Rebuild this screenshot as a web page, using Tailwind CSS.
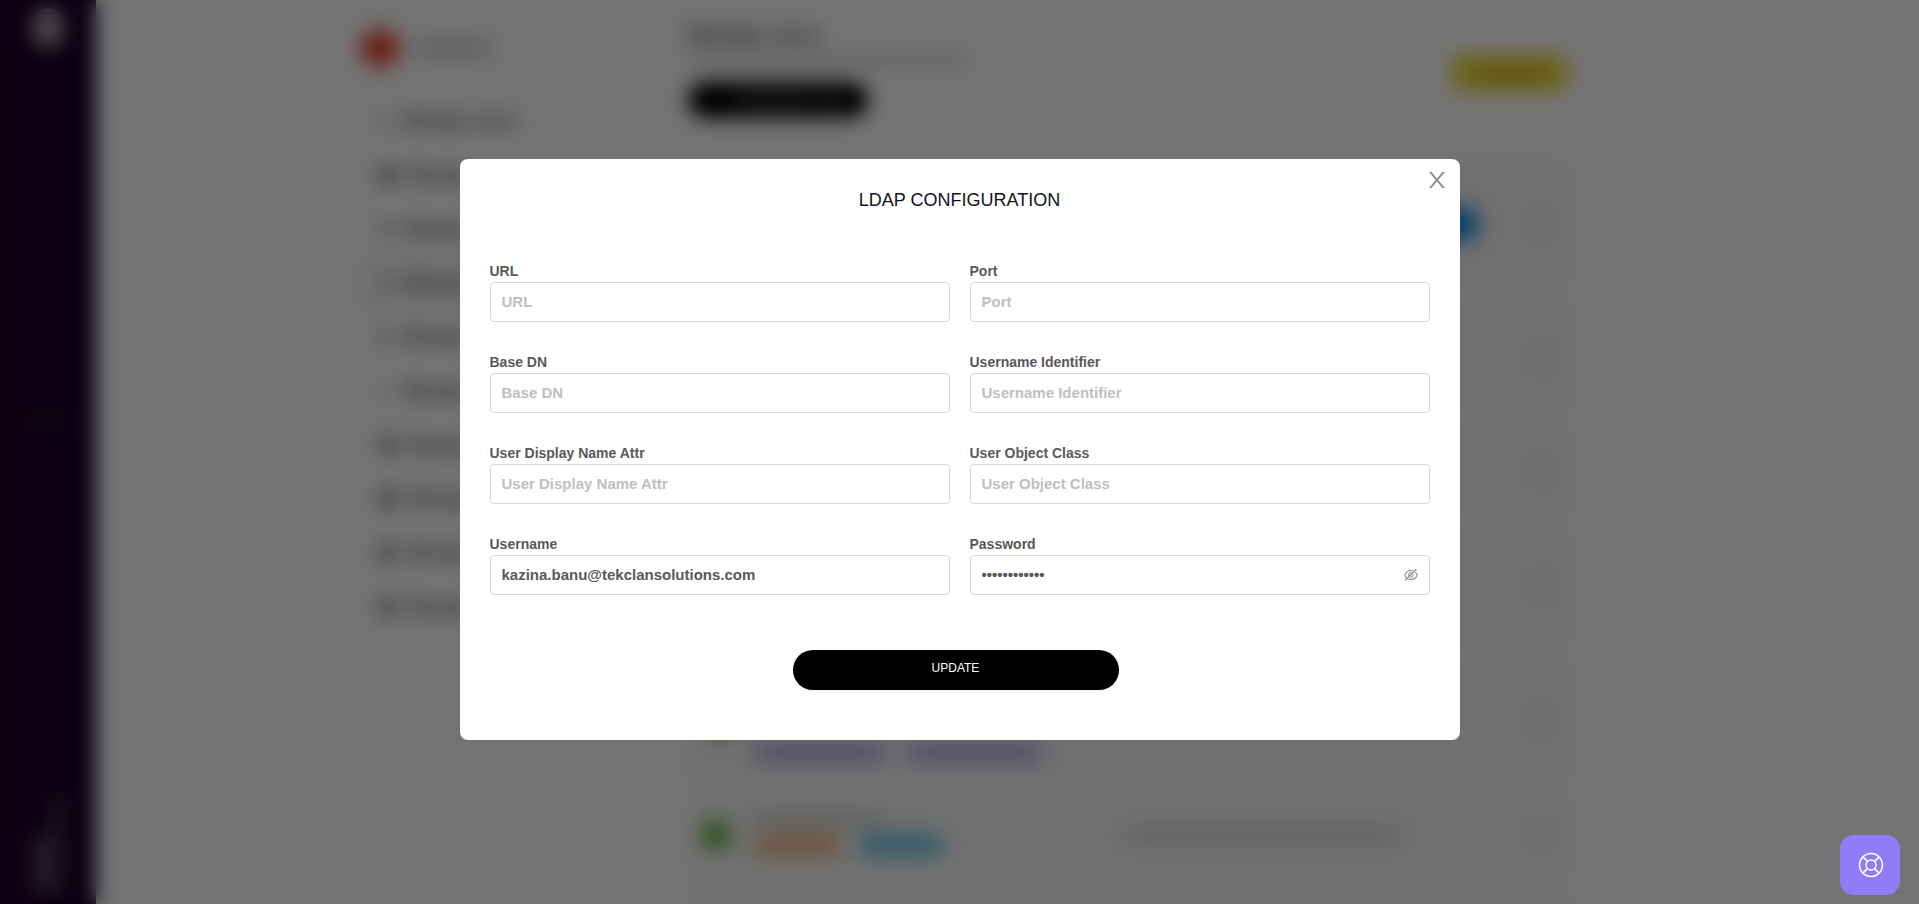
<!DOCTYPE html>
<html lang="en">
<head>
<meta charset="utf-8">
<title>LDAP Configuration</title>
<script src="https://cdn.jsdelivr.net/npm/@tailwindcss/browser@4"></script>
</head>
<body class="min-h-screen overflow-hidden bg-white font-['Liberation_Sans',Arial,sans-serif] text-[#595959]">

<!-- Page behind the dialog -->
<div class="flex h-screen overflow-hidden" aria-hidden="true" inert>
  <aside class="flex w-24 shrink-0 flex-col items-center justify-between bg-linear-to-r from-[#200028] to-[#120028] pt-2 pb-3">
    <div class="h-10 w-8 rounded-full bg-[#a09ca4]"></div>
    <div class="h-3 w-10 bg-[#241830]"></div>
    <div class="flex items-end">
      <div class="h-14 w-5 bg-[#4a3c50]"></div>
      <div class="h-24 w-3 bg-[#403446]"></div>
    </div>
  </aside>

  <div class="flex min-w-0 flex-1 pl-[264px]">
    <nav class="w-[328px] shrink-0 pt-7">
      <div class="flex items-center gap-3">
        <div class="size-10 rounded-full bg-[#e8503f]"></div>
        <div class="h-3 w-20 bg-[#c4c4c4]"></div>
      </div>
      <ul class="pt-[26px] text-[17px] font-bold text-[#444]">
        <li class="flex h-[54px] items-center gap-3 pl-5"><span class="size-3 bg-[#ccc]"></span>Manage users</li>
        <li class="flex h-[54px] items-center gap-3 pl-5"><span class="h-3 w-4 bg-[#555]"></span>Manage</li>
        <li class="flex h-[54px] items-center gap-3 pl-5"><span class="size-3 bg-[#aaa]"></span>Manage</li>
        <li class="flex h-[54px] items-center gap-3 bg-[#f8f8f8] pl-5"><span class="size-3 bg-[#aaa]"></span>Manage</li>
        <li class="flex h-[54px] items-center gap-3 pl-5"><span class="size-3 bg-[#aaa]"></span>Manage</li>
        <li class="flex h-[54px] items-center gap-3 pl-5"><span class="size-3 bg-[#ddd]"></span>Manage</li>
        <li class="flex h-[54px] items-center gap-3 pl-5"><span class="size-4 bg-[#888]"></span>Manage</li>
        <li class="flex h-[54px] items-center gap-3 pl-5"><span class="size-4 bg-[#777]"></span>Manage</li>
        <li class="flex h-[54px] items-center gap-3 pl-5"><span class="size-4 bg-[#888]"></span>Manage</li>
        <li class="flex h-[54px] items-center gap-3 pl-5"><span class="size-4 bg-[#888]"></span>Manage</li>
      </ul>
    </nav>

    <main class="w-[882px] shrink-0 pt-5">
      <div class="flex items-center justify-between">
        <div>
          <h2 class="text-xl leading-7 font-bold text-[#555]">Manage users</h2>
          <div class="mt-1 flex h-4 items-center"><div class="h-2 w-[275px] bg-[#ccc]"></div></div>
          <div class="mt-3.5 flex h-9 w-[180px] items-center justify-end gap-3 rounded-full bg-black px-8">
            <div class="h-2 w-20 bg-[#555]"></div><div class="h-4 w-2 bg-[#777]"></div>
          </div>
        </div>
        <div class="mt-2 flex h-9 w-[120px] items-center justify-center rounded-full bg-[#f0da30]"><div class="h-2 w-16 bg-[#b09c20]"></div></div>
      </div>

      <div class="mt-11 flex flex-col gap-[18px]">
        <section class="flex h-[124px] items-center justify-end gap-[51px] bg-[#f8f8f8] pr-4">
          <div class="h-9 w-32 rounded-full bg-[#1890e8]"></div><div class="size-6 rounded-full bg-[#f2f2f2]"></div>
        </section>
        <section class="flex h-[106px] items-center justify-end bg-[#f8f8f8] pr-4"><div class="size-6 rounded-full bg-[#f2f2f2]"></div></section>
        <section class="flex h-[84px] items-center justify-end bg-[#f8f8f8] pr-4"><div class="size-6 rounded-full bg-[#f2f2f2]"></div></section>
        <section class="flex h-[114px] items-center justify-end bg-[#f8f8f8] pr-4"><div class="size-6 rounded-full bg-[#f2f2f2]"></div></section>
        <section class="flex h-[118px] items-center bg-[#f8f8f8] px-4">
          <div class="size-8 rounded-full bg-[#68b848]"></div>
          <div class="flex flex-1 gap-4 self-end pb-4 pl-4">
            <div class="h-6 w-[136px] rounded-full bg-[#c0bcec]"></div><div class="h-6 w-[140px] rounded-full bg-[#c0bcec]"></div>
          </div>
          <div class="size-6 rounded-full bg-[#f2f2f2]"></div>
        </section>
        <section class="flex h-[74px] items-center bg-[#f8f8f8] pr-4 pl-3">
          <div class="size-8 rounded-full bg-[#70b850]"></div>
          <div class="flex flex-1 flex-col gap-2 pl-5">
            <div class="h-3 w-[130px] bg-[#ccc]"></div>
            <div class="flex gap-4"><div class="h-6 w-[90px] rounded-full bg-[#f4c090]"></div><div class="h-6 w-[86px] rounded-full bg-[#78cce8]"></div></div>
          </div>
          <div class="mr-[132px] h-2 w-[270px] bg-[#c0c0c0]"></div>
          <div class="size-6 rounded-full bg-[#f2f2f2]"></div>
        </section>
        <section class="h-24 bg-[#f8f8f8]"></section>
      </div>
    </main>
  </div>
</div>

<!-- Dialog -->
<div class="fixed inset-0 flex items-start justify-center bg-black/55 pt-[159px] backdrop-blur-[10px]">
  <div role="dialog" aria-modal="true" aria-labelledby="dialog-title" class="relative w-full max-w-[1000px] rounded-lg bg-white px-[30px] pt-[27px] pb-[50px]">
    <button type="button" aria-label="Close" class="absolute top-2.5 right-3 flex cursor-pointer text-[#8c8c8c]">
      <svg class="size-[22px]" viewBox="64 64 896 896" fill="currentColor"><path d="M563.8 512l262.5-312.9c4.4-5.2.7-13.1-6.1-13.1h-79.8c-4.7 0-9.2 2.1-12.3 5.7L511.6 449.8 295.1 191.7c-3-3.6-7.5-5.7-12.3-5.7H203c-6.8 0-10.5 7.9-6.1 13.1L459.4 512 196.9 824.9A7.95 7.95 0 00203 838h79.8c4.7 0 9.2-2.1 12.3-5.7l216.5-258.1 216.5 258.1c3 3.6 7.5 5.7 12.3 5.7h79.8c6.8 0 10.5-7.9 6.1-13.1L563.8 512z"/></svg>
    </button>
    <h1 id="dialog-title" class="text-center text-lg leading-7 text-[#10151c]">LDAP CONFIGURATION</h1>

    <form class="pt-[47px]" onsubmit="return false">
      <div class="grid grid-cols-2 gap-x-5 gap-y-[30px] text-sm font-bold">
        <div>
          <label for="url" class="block leading-[21px]">URL</label>
          <input id="url" type="text" placeholder="URL" class="block h-10 w-full rounded-sm border border-[#d9d9d9] px-[11px] pb-0.5 text-[15px] placeholder:text-[#bfbfbf]">
        </div>
        <div>
          <label for="port" class="block leading-[21px]">Port</label>
          <input id="port" type="text" placeholder="Port" class="block h-10 w-full rounded-sm border border-[#d9d9d9] px-[11px] pb-0.5 text-[15px] placeholder:text-[#bfbfbf]">
        </div>
        <div>
          <label for="base-dn" class="block leading-[21px]">Base DN</label>
          <input id="base-dn" type="text" placeholder="Base DN" class="block h-10 w-full rounded-sm border border-[#d9d9d9] px-[11px] pb-0.5 text-[15px] placeholder:text-[#bfbfbf]">
        </div>
        <div>
          <label for="identifier" class="block leading-[21px]">Username Identifier</label>
          <input id="identifier" type="text" placeholder="Username Identifier" class="block h-10 w-full rounded-sm border border-[#d9d9d9] px-[11px] pb-0.5 text-[15px] placeholder:text-[#bfbfbf]">
        </div>
        <div>
          <label for="display-name" class="block leading-[21px]">User Display Name Attr</label>
          <input id="display-name" type="text" placeholder="User Display Name Attr" class="block h-10 w-full rounded-sm border border-[#d9d9d9] px-[11px] pb-0.5 text-[15px] placeholder:text-[#bfbfbf]">
        </div>
        <div>
          <label for="object-class" class="block leading-[21px]">User Object Class</label>
          <input id="object-class" type="text" placeholder="User Object Class" class="block h-10 w-full rounded-sm border border-[#d9d9d9] px-[11px] pb-0.5 text-[15px] placeholder:text-[#bfbfbf]">
        </div>
        <div>
          <label for="username" class="block leading-[21px]">Username</label>
          <input id="username" type="text" value="kazina.banu@tekclansolutions.com" class="block h-10 w-full rounded-sm border border-[#d9d9d9] px-[11px] pb-0.5 text-[15px]">
        </div>
        <div>
          <label for="password" class="block leading-[21px]">Password</label>
          <div class="flex h-10 items-center rounded-sm border border-[#d9d9d9] px-[11px]">
            <input id="password" type="password" value="abcdefghijkl" class="h-full min-w-0 flex-1 pb-0.5 text-[15px] outline-none">
            <button type="button" aria-label="Show password" class="cursor-pointer text-[#8c8c8c]">
              <svg class="size-3.5" viewBox="64 64 896 896" fill="currentColor"><path d="M942.2 486.2Q889.47 375.11 816.7 305l-50.88 50.88C807.31 395.53 843.45 447.4 874.7 512 791.5 684.2 673.4 766 512 766q-72.67 0-133.87-22.38L323 798.75Q408 838 512 838q288.3 0 430.2-300.3a60.29 60.29 0 000-51.5zm-63.57-320.64L836 122.88a8 8 0 00-11.32 0L715.31 232.2Q624.86 186 512 186q-288.3 0-430.2 300.3a60.3 60.3 0 000 51.5q56.69 119.4 136.5 191.41L112.48 835a8 8 0 000 11.31L155.17 889a8 8 0 0011.31 0l712.15-712.12a8 8 0 000-11.32zM149.3 512C232.6 339.8 350.7 258 512 258c54.54 0 104.13 9.36 149.12 28.39l-70.3 70.3a176 176 0 00-238.13 238.13l-83.42 83.42C223.1 637.49 183.3 582.28 149.3 512zm246.7 0a112.11 112.11 0 01146.2-106.69L401.31 546.2A112 112 0 01396 512z"/><path d="M508 624c-3.46 0-6.87-.16-10.25-.47l-52.82 52.82a176.09 176.09 0 00227.42-227.42l-52.82 52.82c.31 3.38.47 6.79.47 10.25a111.94 111.94 0 01-112 112z"/></svg>
            </button>
          </div>
        </div>
      </div>
      <div class="flex justify-center pt-[55px] pr-2">
        <button type="submit" class="h-10 w-[326px] cursor-pointer rounded-full bg-black pb-1 text-xs text-white shadow-[0_2px_0_rgba(0,0,0,0.04)]">UPDATE</button>
      </div>
    </form>
  </div>
</div>

<!-- Help launcher -->
<button type="button" aria-label="Help" class="fixed right-[19px] bottom-[9px] flex size-[60px] cursor-pointer items-center justify-center rounded-[14px] bg-[#917cf8] pl-px text-white">
  <svg class="size-[26px]" viewBox="0 0 26 26" fill="none" stroke="currentColor" stroke-width="1.5"><circle cx="13" cy="13" r="11.5"/><circle cx="13" cy="13" r="5"/><path d="M4.9 4.9l4.5 4.5M21.1 4.9l-4.5 4.5M4.9 21.1l4.5-4.5M21.1 21.1l-4.5-4.5"/></svg>
</button>
</body>
</html>
